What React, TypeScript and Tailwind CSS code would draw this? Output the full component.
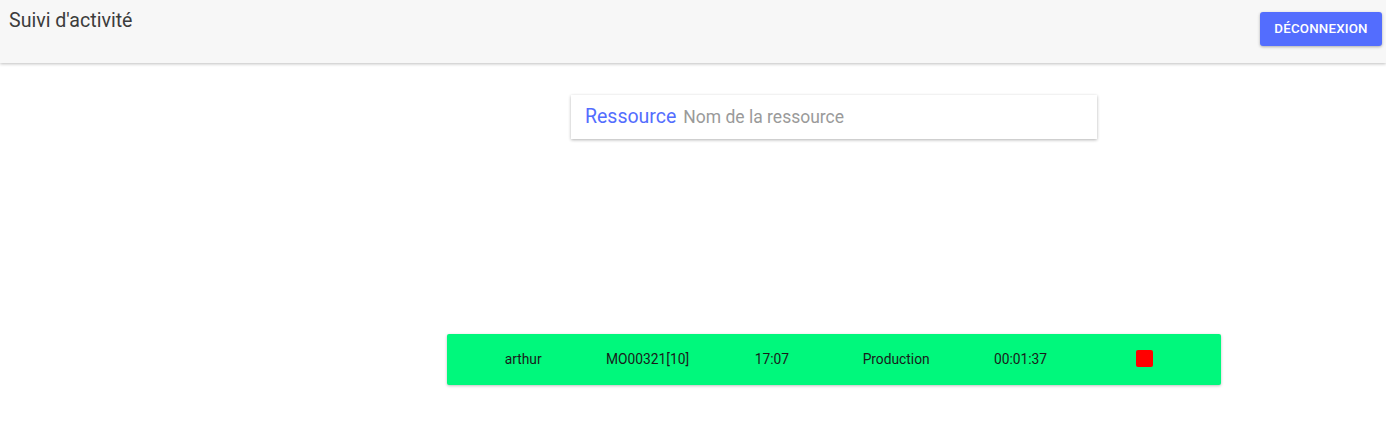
export default function App() {
  const cells = ["arthur", "MO00321[10]", "17:07", "Production", "00:01:37"];

  return (
    <div className="min-h-[427px] bg-white font-['Roboto',sans-serif]">
      <header className="h-[63px] bg-[#f7f7f7] shadow-[0_1px_3px_rgba(0,0,0,0.25)] flex justify-between items-start">
        <h1 className="ml-[9px] mt-[6px] text-[19.6px] text-[#3c3c3c]">Suivi d'activité</h1>
        <button className="mt-[12px] mr-[4px] w-[122px] h-[34px] rounded-[3px] bg-[#536dfe] text-white text-[13.3px] font-medium tracking-[0.2px] shadow-[0_1px_3px_rgba(0,0,0,0.3)]">
          DÉCONNEXION
        </button>
      </header>

      <div className="flex justify-center pt-[32px]">
        <div className="ml-[282px] w-[526px] h-[44px] bg-white shadow-[0_1px_3px_rgba(0,0,0,0.3)] flex items-center px-[14px] gap-[7px]">
          <span className="text-[19.5px] text-[#536dfe]">Ressource</span>
          <input
            placeholder="Nom de la ressource"
            className="flex-1 text-[17.5px] text-[#333] placeholder:text-[#9a9a9a] outline-none bg-transparent"
          />
        </div>
      </div>

      <div className="mt-[195px] ml-[447px] w-[774px] h-[51px] bg-[#00f87c] rounded-[2px] shadow-[0_1px_3px_rgba(0,0,0,0.25)] grid grid-cols-6 px-[14px] items-center text-[13.8px] text-[#1a1a1a]">
        {cells.map((c) => (
          <span key={c} className="text-center">{c}</span>
        ))}
        <span className="flex justify-center">
          <span className="w-[17px] h-[17px] rounded-[2px] bg-[#ff0000] translate-y-[-1px]" />
        </span>
      </div>
    </div>
  );
}
